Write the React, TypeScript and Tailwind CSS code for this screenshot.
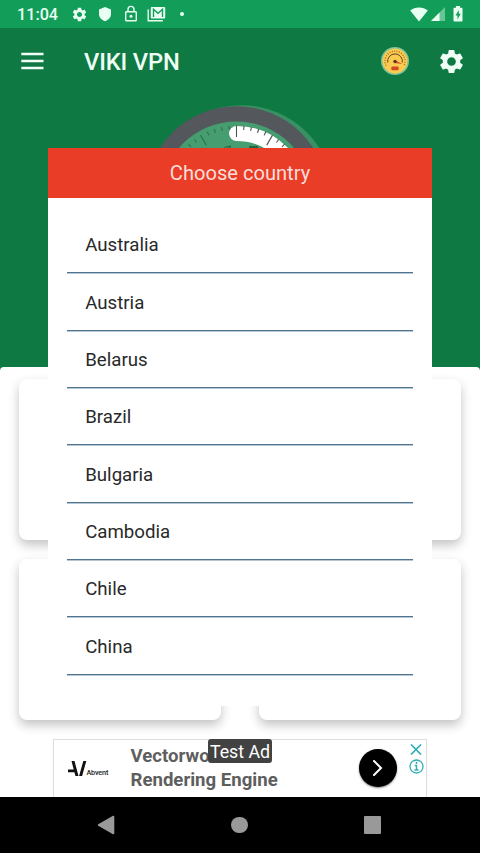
import React from "react";

const countries = [
  "Australia",
  "Austria",
  "Belarus",
  "Brazil",
  "Bulgaria",
  "Cambodia",
  "Chile",
  "China",
];

const GEAR_PATH =
  "M19.14 12.94c.04-.3.06-.61.06-.94 0-.32-.02-.64-.07-.94l2.03-1.58c.18-.14.23-.41.12-.61l-1.92-3.32c-.12-.22-.37-.29-.59-.22l-2.39.96c-.5-.38-1.03-.7-1.62-.94l-.36-2.54c-.04-.24-.24-.41-.48-.41h-3.84c-.24 0-.43.17-.47.41l-.36 2.54c-.59.24-1.13.57-1.62.94l-2.39-.96c-.22-.08-.47 0-.59.22L2.74 8.87c-.12.21-.08.47.12.61l2.03 1.58c-.05.3-.09.63-.09.94s.02.64.07.94l-2.03 1.58c-.18.14-.23.41-.12.61l1.92 3.32c.12.22.37.29.59.22l2.39-.96c.5.38 1.03.7 1.62.94l.36 2.54c.05.24.24.41.48.41h3.84c.24 0 .44-.17.47-.41l.36-2.54c.59-.24 1.13-.56 1.62-.94l2.39.96c.22.08.47 0 .59-.22l1.92-3.32c.12-.22.07-.47-.12-.61l-2.01-1.58zM12 15.6c-1.98 0-3.6-1.62-3.6-3.6s1.62-3.6 3.6-3.6 3.6 1.62 3.6 3.6-1.62 3.6-3.6 3.6z";

const GearIcon: React.FC<{ className: string }> = ({ className }) => (
  <svg viewBox="0 0 24 24" className={className} fill="currentColor">
    <path d={GEAR_PATH} />
  </svg>
);

const StatusBar: React.FC = () => (
  <div className="flex h-7 items-center bg-[#129e59] pl-[17px] pr-[14px] text-[#e9fff2]">
    <span className="mt-[2px] w-[41px] text-[16.2px] font-medium leading-none">
      11:04
    </span>
    <GearIcon className="ml-[12.5px] size-[17px]" />
    <svg viewBox="0 0 14 16" className="ml-[10.5px] h-4 w-[14px]" fill="currentColor">
      <path d="M7 1 13 3.4V8c0 3.3-2.6 6.2-6 7.2C3.6 14.2 1 11.3 1 8V3.4z" />
    </svg>
    <svg
      viewBox="0 0 14 18"
      className="ml-[12px] h-[18px] w-[14px]"
      fill="none"
      stroke="currentColor"
      strokeWidth="1.4"
    >
      <rect x="1.7" y="6.7" width="10.6" height="9" rx="0.8" />
      <path d="M4 6.5V4.4a3 3 0 0 1 6 0v2.1" />
      <circle cx="7" cy="11.2" r="1.5" fill="currentColor" stroke="none" />
    </svg>
    <svg viewBox="0 0 19 16" className="ml-[9px] h-4 w-[19px]">
      <path d="M1.2 3.5v11.2h14.6" fill="none" stroke="currentColor" strokeWidth="1.4" />
      <rect x="3.8" y="1" width="14.4" height="11.5" rx="1" fill="currentColor" />
      <path
        d="M6.5 10.9V3.3l4.5 3.9 4.5-3.9v7.6"
        fill="none"
        stroke="#129e59"
        strokeWidth="1.4"
      />
    </svg>
    <span className="ml-[14px] size-1 rounded-full bg-current" />
    <div className="ml-auto flex items-center">
      <svg viewBox="0 0 18 15" className="h-[15px] w-[18px]" fill="currentColor">
        <path d="M9 14.5 0.2 3.6C2.6 1.6 5.6.6 9 .6s6.4 1 8.8 3z" />
      </svg>
      <svg viewBox="0 0 14 14" className="ml-[3px] size-[14px]" fill="currentColor">
        <path d="M14 0v14H0z" opacity="0.4" />
        <path d="M8.5 5.5V14H0z" />
      </svg>
      <svg viewBox="0 0 10 16" className="ml-[8px] mr-[2.6px] h-4 w-[10px]">
        <path
          d="M3 0h4v1.8h1.7c.5 0 .8.3.8.8v12c0 .5-.3.9-.8.9H1.3c-.5 0-.8-.4-.8-.9v-12c0-.5.3-.8.8-.8H3z"
          fill="currentColor"
        />
        <path d="M5.8 4 2.5 9.5h2v4l3.2-5.7H5.8z" fill="#129e59" />
      </svg>
    </div>
  </div>
);

const SpeedIcon: React.FC = () => (
  <svg viewBox="0 0 28 28" className="size-7">
    <circle cx="14" cy="14" r="14" fill="#84c496" />
    <circle cx="14" cy="14" r="12.4" fill="#fbcb50" />
    <path
      d="M5 18.5A10 10 0 1 1 23 18.5"
      fill="none"
      stroke="#a56d2a"
      strokeWidth="1.5"
      strokeDasharray="0.9 1.5"
    />
    <path
      d="M6.7 15.5A7.4 7.4 0 1 1 21.3 15.5"
      fill="none"
      stroke="#654222"
      strokeWidth="1"
    />
    <path d="M14 13.2 21.3 17 13.5 16z" fill="#d5482d" />
    <circle cx="14" cy="14.5" r="1.7" fill="#593821" />
    <rect x="10.3" y="19.6" width="7.4" height="3.6" rx="1.2" fill="#cf4927" />
  </svg>
);

const Toolbar: React.FC = () => (
  <header className="flex h-[66px] items-center pl-[21px] pr-[14px] text-[#effff5]">
    <svg
      viewBox="0 0 23 18"
      className="h-[18px] w-[23px]"
      stroke="currentColor"
      strokeWidth="2.4"
    >
      <path d="M.3 2h22.200M.3 9h22.200M.3 16h22.200" />
    </svg>
    <h1 className="ml-[40px] mt-[3px] text-[23.7px] font-medium leading-none tracking-[-0.15px]">
      VIKI VPN
    </h1>
    <div className="ml-auto flex items-center gap-[27.7px]">
      <SpeedIcon />
      <GearIcon className="size-[29px]" />
    </div>
  </header>
);

// one tick every 6 degrees, a long one every 30
const ticks = Array.from({ length: 21 }, (_, i) => (i - 10) * 6);

const Gauge: React.FC = () => (
  <svg viewBox="0 0 200 200" className="mx-auto size-[200px]">
    <circle cx="101.5" cy="103.5" r="92.3" fill="#399062" />
    <circle cx="96.5" cy="103.5" r="91.3" fill="#54575c" />
    <circle cx="96.5" cy="103.5" r="76" fill="#459d70" />
    <path
      d="M96.5 39.5A64 64 0 0 1 160.5 103.5"
      fill="none"
      stroke="#fff"
      strokeWidth="15"
      strokeLinecap="round"
    />
    {ticks.map((angle) => (
      <line
        key={angle}
        x1="96.5"
        x2="96.5"
        y1="31.5"
        y2={angle % 30 === 0 ? 43 : 35.5}
        stroke={angle < 0 ? "#34704f" : "#4b5553"}
        strokeWidth="1.1"
        transform={`rotate(${angle} 96.5 103.5)`}
      />
    ))}
    <path d="M84 53l7-1.5v2H84zM109 52h9v2h-9z" fill="#26653f" />
  </svg>
);

const Tile: React.FC = () => (
  <div className="h-[161px] flex-1 rounded-lg bg-white shadow-[0_5px_11px_rgba(0,0,0,0.24)]" />
);

const CountryDialog: React.FC = () => (
  <div className="absolute left-12 top-[147.5px] h-[558.5px] w-96 bg-white">
    <h2 className="flex h-[50px] items-center justify-center bg-[#e93d27] pt-[2px] text-[20.1px] leading-none text-[#fbdeda]">
      Choose country
    </h2>
    <ul className="ml-[18.5px] mr-[19px] mt-[18.5px]">
      {countries.map((country) => (
        <li
          key={country}
          className="flex h-[57.33px] items-center border-b border-[#4f7590] pl-[18.7px] pt-[2.5px] text-[18.67px] text-[#292929] shadow-[0_0.5px_0_#6d8ba1]"
        >
          {country}
        </li>
      ))}
    </ul>
  </div>
);

const AdBanner: React.FC = () => (
  <div className="relative ml-[53px] flex h-[58px] w-[374px] border border-b-0 border-[#dedede] bg-white">
    <div className="flex w-[76.5px] items-center pl-[13.5px] pt-px">
      <svg viewBox="0 0 19 16" className="h-4 w-[19px] shrink-0" fill="#111">
        <path d="M3.5 0h3l4 15h-3L6.4 11.3H0V8.5h5.7zM15.3 0h3l-4.2 15h-3z" />
      </svg>
      <span className="mt-[8px] text-[7.2px] font-medium leading-none tracking-[-0.15px] text-[#222]">
        Abvent
      </span>
    </div>
    <p className="pt-[4px] text-[18.6px] font-bold leading-6 text-[#5e5e5e]">
      Vectorwo
      <br />
      Rendering Engine
    </p>
    <span className="absolute left-[154px] top-[-1px] flex h-[24px] w-[64px] items-center justify-center rounded-[3px] bg-[#424242] pt-px text-[17.8px] leading-none text-white">
      Test Ad
    </span>
    <div className="ml-auto mr-[12px] mt-[9px] flex size-[38px] items-center justify-center rounded-full bg-black shadow-[0_1px_2px_rgba(0,0,0,0.5)]">
      <svg viewBox="0 0 10 16" className="h-4 w-[10px]" fill="none" stroke="#fff" strokeWidth="2">
        <path d="M1 1l7 7-7 7" strokeLinecap="round" />
      </svg>
    </div>
    <div className="mr-[2.3px] flex flex-col items-center gap-[4px] pt-[3.5px]">
      <svg viewBox="0 0 12 11" className="h-[11px] w-3" stroke="#31aeb5" strokeWidth="1.7">
        <path d="M1 .5l10 10M11 .5L1 10.5" />
      </svg>
      <svg viewBox="0 0 15 15" className="size-[15px]" fill="none" stroke="#31aeb5">
        <circle cx="7.5" cy="7.5" r="6.5" strokeWidth="1.3" />
        <path d="M7.5 3v2M5.7 6.5h1.8V11M5.5 11h4" strokeWidth="1.5" />
      </svg>
    </div>
  </div>
);

const NavBar: React.FC = () => (
  <nav className="flex h-14 items-center justify-between bg-black pl-[96.5px] pr-[99px]">
    <svg viewBox="0 0 18 20" className="h-5 w-[18px]" fill="#999">
      <path d="M16 .8c.6-.4 1.3 0 1.3.6v17.2c0 .6-.7 1-1.3.6L1.2 10.7c-.6-.4-.6-1 0-1.4z" />
    </svg>
    <span className="ml-[1px] size-[16.5px] rounded-full bg-[#999]" />
    <span className="size-[17.5px] rounded-[1px] bg-[#999]" />
  </nav>
);

const App: React.FC = () => {
  return (
    <div className="relative flex h-[853px] w-[480px] flex-col overflow-hidden bg-[#0f7944] font-['Roboto',sans-serif]">
      <StatusBar />
      <Toolbar />
      <div className="h-[273px] shrink-0">
        <Gauge />
      </div>
      <main className="flex h-[430px] shrink-0 flex-col rounded-t-[4px] bg-white pt-3">
        <div className="flex gap-[38px] px-[18.7px]">
          <Tile />
          <Tile />
        </div>
        <div className="mt-[19px] flex gap-[38px] px-[18.7px]">
          <Tile />
          <Tile />
        </div>
        <div className="mt-auto">
          <AdBanner />
        </div>
      </main>
      <NavBar />
      <CountryDialog />
    </div>
  );
};

export default App;
